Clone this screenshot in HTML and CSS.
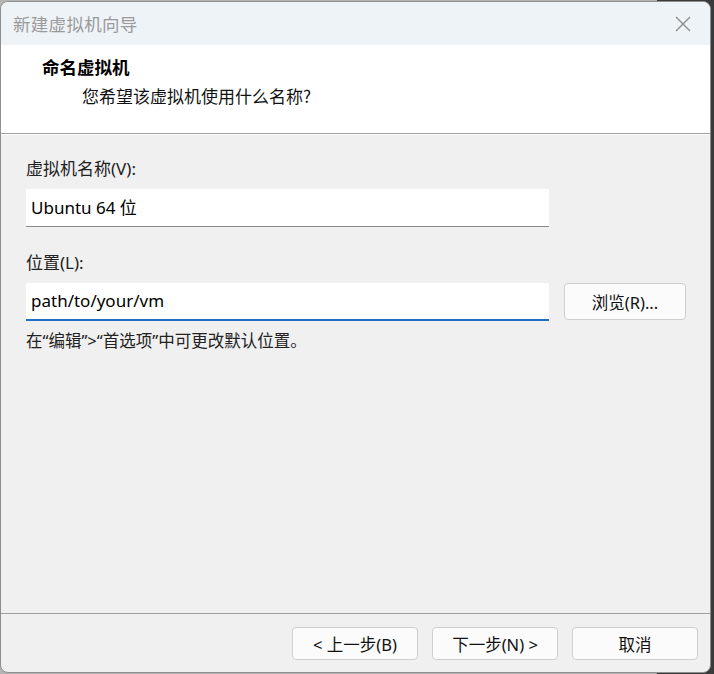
FILE: index.html
```html
<!DOCTYPE html>
<html lang="zh-CN">
<head>
<meta charset="utf-8">
<title>新建虚拟机向导</title>
<link rel="stylesheet" href="styles.css">
</head>
<body>
<div class="window">
  <div class="titlebar">
    <span class="title">新建虚拟机向导</span>
    <svg class="close" width="16" height="16" viewBox="0 0 16 16"><path d="M1 1 L15 15 M15 1 L1 15" stroke="#8a8a8a" stroke-width="1.3" fill="none"/></svg>
  </div>
  <div class="header">
    <div class="h-title">命名虚拟机</div>
    <div class="h-sub">您希望该虚拟机使用什么名称?</div>
  </div>
  <div class="content">
    <label class="label">虚拟机名称(V):</label>
    <div class="row">
      <div class="input">Ubuntu 64 位</div>
    </div>
    <label class="label second">位置(L):</label>
    <div class="row">
      <div class="input focused">path/to/your/vm</div>
      <div class="btn browse">浏览(R)...</div>
    </div>
    <div class="hint">在“编辑”&gt;“首选项”中可更改默认位置。</div>
  </div>
  <div class="footer">
    <div class="btn">&lt; 上一步(B)</div>
    <div class="btn">下一步(N) &gt;</div>
    <div class="btn">取消</div>
  </div>
</div>
</body>
</html>
```

FILE: styles.css
```css
html, body {
  margin: 0;
  padding: 0;
}
body {
  width: 714px;
  height: 674px;
  overflow: hidden;
  background: linear-gradient(to right, #b4b4b4 0, #b4b4b4 657px, #3a3a3a 657px);
  font-family: "Noto Sans", "Noto Sans CJK SC", sans-serif;
  color: #000;
}
.window {
  box-sizing: border-box;
  margin-top: 1px;
  width: 711px;
  height: 672px;
  border: 1px solid #8e8e8e;
  border-radius: 8px;
  overflow: hidden;
  background: #f0f0f0;
  display: flex;
  flex-direction: column;
}
.titlebar {
  height: 43px;
  flex: none;
  background: #eef3f8;
  display: flex;
  align-items: center;
  justify-content: space-between;
  padding: 0 19px 0 12px;
}
.title {
  font-family: "Noto Sans CJK SC", sans-serif;
  font-size: 17.5px;
  color: #9a9a9a;
  letter-spacing: 0.3px;
}
.close {
  display: block;
}
.header {
  flex: none;
  background: #fff;
  border-bottom: 1px solid #a0a0a0;
  box-shadow: 0 1px 0 #fff;
  box-sizing: border-box;
  height: 89px;
  padding: 10px 0 0 41px;
}
.h-title {
  font-family: "Noto Sans CJK SC", sans-serif;
  font-weight: bold;
  font-size: 17.5px;
  line-height: 24px;
}
.h-sub {
  font-family: "Noto Sans CJK SC", sans-serif;
  font-size: 17px;
  line-height: 24px;
  margin: 5px 0 0 40px;
  color: #111;
}
.content {
  flex: 1;
  padding: 24px 0 0 25px;
  display: flex;
  flex-direction: column;
}
.label {
  font-size: 17px;
  line-height: 22px;
  color: #222;
  display: block;
}
.label.second {
  margin-top: 25px;
}
.row {
  display: flex;
  align-items: flex-start;
  gap: 14px;
  margin-top: 9px;
}
.input {
  box-sizing: border-box;
  width: 523px;
  height: 38px;
  background: #fff;
  border-bottom: 1px solid #8a8a8a;
  padding: 0 5px;
  font-size: 17px;
  line-height: 37px;
  color: #000;
}
.input.focused {
  border-bottom: 2px solid #1f6fc0;
  line-height: 36px;
}
.btn {
  box-sizing: border-box;
  width: 122px;
  height: 37px;
  border: 1px solid #cfcfcf;
  border-radius: 4px;
  background: #fbfbfb;
  display: flex;
  align-items: center;
  justify-content: center;
  font-size: 16.5px;
  color: #111;
}
.browse {
  margin-left: 1px;
}
.hint {
  margin-top: 9px;
  font-size: 16.5px;
  line-height: 22px;
  color: #222;
}
.footer {
  flex: none;
  height: 59px;
  border-top: 1px solid #a0a0a0;
  box-sizing: border-box;
  display: flex;
  justify-content: flex-end;
  align-items: flex-start;
  gap: 14px;
  padding: 13px 12px 0 0;
}
.footer .btn {
  width: 126px;
  height: 33px;
}
```
